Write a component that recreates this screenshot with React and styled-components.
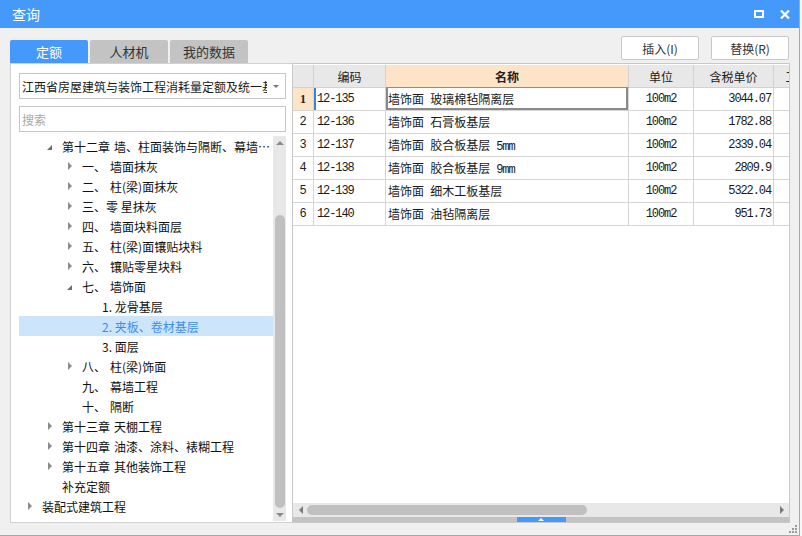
import React from "react";
import styled, { createGlobalStyle } from "styled-components";

const GlobalStyle = createGlobalStyle`
  html, body {
    margin: 0;
    padding: 0;
    background: #f7f7f7;
  }
  body {
    font-family: "Noto Sans CJK SC", "Liberation Sans", sans-serif;
    font-size: 12px;
    color: #1a1a1a;
  }
  * { box-sizing: border-box; }
`;

const Window = styled.div`
  position: relative;
  width: 800px;
  height: 536px;
  display: flex;
  flex-direction: column;
  background: #f0f0f0;
  border-right: 1px solid #a8a8a8;
  border-bottom: 1px solid #a8a8a8;
`;

// title bar
const TitleBar = styled.div`
  height: 28px;
  flex: none;
  display: flex;
  align-items: center;
  padding: 0 9px 0 12px;
  background: #4499fa;
  color: #fff;
  font-size: 14px;
`;
const Title = styled.div`
  flex: 1;
`;
const MaxBox = styled.div`
  width: 10px;
  height: 8px;
  border: 2px solid #fff;
  margin-right: 16px;
`;

// body
const Body = styled.div`
  flex: 1;
  display: grid;
  grid-template-columns: 282px 498px;
  grid-template-rows: 27px 1fr;
  padding: 8px 0 12px 10px;
  min-height: 0;
`;
const Tabs = styled.div`
  display: flex;
  gap: 2px;
  align-self: end;
`;
const Tab = styled.div`
  width: 78px;
  height: 23px;
  display: flex;
  align-items: center;
  justify-content: center;
  font-size: 13px;
  border-radius: 2px 2px 0 0;
  background: ${(p) => (p.active ? "#4499fa" : "#c3c3c3")};
  color: ${(p) => (p.active ? "#fff" : "#333")};
`;
const Buttons = styled.div`
  display: flex;
  justify-content: flex-end;
  align-items: flex-start;
  gap: 12px;
  padding-right: 1px;
`;
const Button = styled.div`
  width: 78px;
  height: 24px;
  display: flex;
  align-items: center;
  justify-content: center;
  background: #fff;
  border: 1px solid #c9c9c9;
  border-radius: 2px;
  font-size: 12px;
  color: #333;
`;

// left panel
const LeftPanel = styled.div`
  display: flex;
  flex-direction: column;
  min-height: 0;
  background: #fff;
  border: 1px solid #d2d2d2;
  border-right: none;
  padding: 9px 6px 1px 8px;
`;
const Select = styled.div`
  height: 26px;
  flex: none;
  display: flex;
  align-items: center;
  padding: 0 6px 0 2px;
  border: 1px solid #c6c6c6;
`;
const SelectText = styled.div`
  flex: 1;
  white-space: nowrap;
  overflow: hidden;
  margin-right: 6px;
`;
const DownCaret = styled.div`
  width: 0;
  height: 0;
  border-left: 3px solid transparent;
  border-right: 3px solid transparent;
  border-top: 3px solid #777;
`;
const Search = styled.div`
  height: 26px;
  flex: none;
  margin-top: 7px;
  display: flex;
  align-items: center;
  padding-left: 2px;
  border: 1px solid #c6c6c6;
  color: #a8a8a8;
`;
const TreeArea = styled.div`
  flex: 1;
  min-height: 0;
  margin-top: 4px;
  display: flex;
`;
const TreeList = styled.div`
  flex: 1;
  min-width: 0;
`;
const TreeRow = styled.div`
  height: 20px;
  display: flex;
  align-items: center;
  padding-left: ${(p) => p.level * 20 + 6}px;
  background: ${(p) => (p.selected ? "#cce5fa" : "transparent")};
  color: ${(p) => (p.selected ? "#3f8fe8" : "#111")};
`;
const Toggle = styled.div`
  width: 17px;
  flex: none;
  display: flex;
  align-items: center;
  padding-left: ${(p) => (p.open ? 2 : 3)}px;
`;
const Closed = styled.div`
  width: 0;
  height: 0;
  border-top: 4px solid transparent;
  border-bottom: 4px solid transparent;
  border-left: 4px solid #8a8a8a;
`;
const Opened = styled.div`
  width: 0;
  height: 0;
  border-top: 5px solid transparent;
  border-right: 5px solid #6e6e6e;
  margin-top: 2px;
`;
const Label = styled.div`
  flex: 1;
  min-width: 0;
  white-space: nowrap;
  overflow: hidden;
  text-overflow: ellipsis;
`;
const Num = styled.span`
  margin-right: 4px;
`;

// scrollbars
const VScroll = styled.div`
  width: 13px;
  flex: none;
  display: flex;
  flex-direction: column;
  align-items: center;
  background: #e8e8e8;
`;
const ArrowCell = styled.div`
  height: 13px;
  flex: none;
  display: flex;
  align-items: center;
  justify-content: center;
`;
const Tri = styled.div`
  width: 0;
  height: 0;
  border-left: 4px solid transparent;
  border-right: 4px solid transparent;
  ${(p) =>
    p.dir === "up"
      ? "border-bottom: 4px solid #8a8a8a;"
      : "border-top: 4px solid #8a8a8a;"}
`;
const VTrack = styled.div`
  flex: 1;
  display: flex;
  flex-direction: column;
  justify-content: flex-end;
`;
const VThumb = styled.div`
  width: 10px;
  height: 293px;
  border-radius: 5px;
  background: #c0c0c0;
`;

// table panel
const TablePanel = styled.div`
  display: flex;
  flex-direction: column;
  min-height: 0;
  background: #fff;
  border: 1px solid #c9c9c9;
`;
const GridWrap = styled.div`
  flex: 1;
  min-height: 0;
  overflow: hidden;
  padding-top: 1px;
`;
const Grid = styled.div`
  display: grid;
  grid-template-columns: 21px 72px 243px 65px 80px 60px;
  width: 541px;
`;
const HeadCell = styled.div`
  height: 23px;
  display: flex;
  align-items: center;
  justify-content: center;
  white-space: nowrap;
  overflow: hidden;
  font-size: 12px;
  color: #222;
  background: ${(p) => (p.active ? "#fde4c6" : "#e8e8e8")};
  font-weight: ${(p) => (p.active ? 700 : 400)};
  border-right: 1px solid #d2d2d2;
  border-bottom: 1px solid ${(p) => (p.active ? "#4a9af6" : "#d2d2d2")};
`;
const Cell = styled.div`
  height: 23px;
  display: flex;
  align-items: center;
  white-space: pre;
  overflow: hidden;
  border-right: 1px solid #d6d6d6;
  border-bottom: 1px solid #d6d6d6;
  justify-content: ${(p) =>
    p.align === "right" ? "flex-end" : p.align === "center" ? "center" : "flex-start"};
  padding: ${(p) => (p.align === "right" ? "0 2px 0 0" : p.align === "center" ? "0" : "0 0 0 2px")};
`;
const RowNum = styled(Cell)`
  justify-content: center;
  padding: 0;
  background: ${(p) => (p.current ? "#fde4c6" : "#fff")};
  font-family: ${(p) => (p.current ? '"Liberation Serif", serif' : '"Liberation Mono", monospace')};
  font-weight: ${(p) => (p.current ? 700 : 400)};
  font-size: 12px;
  color: #222;
`;
const CodeCell = styled(Cell)`
  padding-left: 3px;
  box-shadow: ${(p) => (p.current ? "inset 2px 0 0 #2f86ef" : "none")};
`;
const NameCell = styled(Cell)`
  box-shadow: ${(p) =>
    p.focused ? "inset 2px 0 0 #8a8a8a, inset -2px 0 0 #8a8a8a, inset 0 -2px 0 #8a8a8a" : "none"};
`;
const Mono = styled.span`
  font-family: "Liberation Mono", monospace;
  font-size: 12px;
  letter-spacing: -1.1px;
`;

const HScroll = styled.div`
  height: 14px;
  flex: none;
  display: flex;
  align-items: center;
  background: #e8e8e8;
  padding: 0 5px 0 6px;
`;
const SideTri = styled.div`
  width: 0;
  height: 0;
  border-top: 4px solid transparent;
  border-bottom: 4px solid transparent;
  ${(p) =>
    p.dir === "left"
      ? "border-right: 4px solid #7a7a7a;"
      : "border-left: 4px solid #7a7a7a;"}
`;
const HThumb = styled.div`
  width: 280px;
  height: 10px;
  margin-left: 4px;
  border-radius: 5px;
  background: #c0c0c0;
`;
const Spacer = styled.div`
  flex: 1;
`;
const Splitter = styled.div`
  height: 5px;
  flex: none;
  display: flex;
  justify-content: center;
  background: #c3c3c3;
`;
const SplitTab = styled.div`
  width: 49px;
  display: flex;
  align-items: center;
  justify-content: center;
  background: #4499fa;
`;
const SplitTri = styled.div`
  width: 0;
  height: 0;
  border-left: 3px solid transparent;
  border-right: 3px solid transparent;
  border-bottom: 3px solid #fff;
`;
const Grip = styled.svg`
  position: absolute;
  right: 2px;
  bottom: 2px;
`;

const tree = [
  { level: 1, toggle: "open", num: "第十二章", text: "墙、柱面装饰与隔断、幕墙工程" },
  { level: 2, toggle: "closed", num: "一、", text: "墙面抹灰" },
  { level: 2, toggle: "closed", num: "二、", text: "柱(梁)面抹灰" },
  { level: 2, toggle: "closed", text: "三、零 星抹灰" },
  { level: 2, toggle: "closed", num: "四、", text: "墙面块料面层" },
  { level: 2, toggle: "closed", num: "五、", text: "柱(梁)面镶贴块料" },
  { level: 2, toggle: "closed", num: "六、", text: "镶贴零星块料" },
  { level: 2, toggle: "open", num: "七、", text: "墙饰面" },
  { level: 3, text: "1. 龙骨基层" },
  { level: 3, text: "2. 夹板、卷材基层", selected: true },
  { level: 3, text: "3. 面层" },
  { level: 2, toggle: "closed", num: "八、", text: "柱(梁)饰面" },
  { level: 2, num: "九、", text: "幕墙工程" },
  { level: 2, num: "十、", text: "隔断" },
  { level: 1, toggle: "closed", num: "第十三章", text: "天棚工程" },
  { level: 1, toggle: "closed", num: "第十四章", text: "油漆、涂料、裱糊工程" },
  { level: 1, toggle: "closed", num: "第十五章", text: "其他装饰工程" },
  { level: 1, text: "补充定额" },
  { level: 0, toggle: "closed", text: "装配式建筑工程" },
];

const rows = [
  { code: "12-135", name: "墙饰面 玻璃棉毡隔离层", unit: "100m2", price: "3044.07" },
  { code: "12-136", name: "墙饰面 石膏板基层", unit: "100m2", price: "1782.88" },
  { code: "12-137", name: "墙饰面 胶合板基层 5mm", unit: "100m2", price: "2339.04" },
  { code: "12-138", name: "墙饰面 胶合板基层 9mm", unit: "100m2", price: "2809.9" },
  { code: "12-139", name: "墙饰面 细木工板基层", unit: "100m2", price: "5322.04" },
  { code: "12-140", name: "墙饰面 油毡隔离层", unit: "100m2", price: "951.73" },
];

// ascii runs get the narrow mono face, like the original grid font
const mixed = (s) =>
  s.split(/([\x20-\x7e]+)/).map((part, i) =>
    /^[\x20-\x7e]+$/.test(part) ? <Mono key={i}>{part}</Mono> : part
  );

const App = () => {
  return (
    <Window>
      <GlobalStyle />
      <TitleBar>
        <Title>查询</Title>
        <MaxBox />
        <svg width="10" height="9" viewBox="0 0 10 9">
          <path d="M1 0.5 L9 8.5 M9 0.5 L1 8.5" stroke="#fff" strokeWidth="2.2" />
        </svg>
      </TitleBar>
      <Body>
        <Tabs>
          <Tab active>定额</Tab>
          <Tab>人材机</Tab>
          <Tab>我的数据</Tab>
        </Tabs>
        <Buttons>
          <Button>插入(I)</Button>
          <Button>替换(R)</Button>
        </Buttons>

        <LeftPanel>
          <Select>
            <SelectText>江西省房屋建筑与装饰工程消耗量定额及统一基价表(2017)</SelectText>
            <DownCaret />
          </Select>
          <Search>搜索</Search>
          <TreeArea>
            <TreeList>
              {tree.map((item, i) => (
                <TreeRow key={i} level={item.level} selected={item.selected}>
                  <Toggle open={item.toggle === "open"}>
                    {item.toggle === "closed" && <Closed />}
                    {item.toggle === "open" && <Opened />}
                  </Toggle>
                  <Label>
                    {item.num && <Num>{item.num}</Num>}
                    {item.text}
                  </Label>
                </TreeRow>
              ))}
            </TreeList>
            <VScroll>
              <ArrowCell>
                <Tri dir="up" />
              </ArrowCell>
              <VTrack>
                <VThumb />
              </VTrack>
              <ArrowCell>
                <Tri dir="down" />
              </ArrowCell>
            </VScroll>
          </TreeArea>
        </LeftPanel>

        <TablePanel>
          <GridWrap>
            <Grid>
              <HeadCell />
              <HeadCell>编码</HeadCell>
              <HeadCell active>名称</HeadCell>
              <HeadCell>单位</HeadCell>
              <HeadCell>含税单价</HeadCell>
              <HeadCell>工程量</HeadCell>
              {rows.map((r, i) => (
                <React.Fragment key={r.code}>
                  <RowNum current={i === 0}>{i + 1}</RowNum>
                  <CodeCell current={i === 0}>
                    <Mono>{r.code}</Mono>
                  </CodeCell>
                  <NameCell focused={i === 0}>
                    <span>{mixed(r.name)}</span>
                  </NameCell>
                  <Cell align="center">
                    <Mono>{r.unit}</Mono>
                  </Cell>
                  <Cell align="right">
                    <Mono>{r.price}</Mono>
                  </Cell>
                  <Cell />
                </React.Fragment>
              ))}
            </Grid>
          </GridWrap>
          <HScroll>
            <SideTri dir="left" />
            <HThumb />
            <Spacer />
            <SideTri dir="right" />
          </HScroll>
          <Splitter>
            <SplitTab>
              <SplitTri />
            </SplitTab>
          </Splitter>
        </TablePanel>
      </Body>
      <Grip width="8" height="8" viewBox="0 0 8 8">
        <rect x="6" y="0" width="2" height="2" fill="#9a9a9a" />
        <rect x="3" y="3" width="2" height="2" fill="#9a9a9a" />
        <rect x="6" y="3" width="2" height="2" fill="#9a9a9a" />
        <rect x="0" y="6" width="2" height="2" fill="#9a9a9a" />
        <rect x="3" y="6" width="2" height="2" fill="#9a9a9a" />
        <rect x="6" y="6" width="2" height="2" fill="#9a9a9a" />
      </Grip>
    </Window>
  );
};

export default App;
